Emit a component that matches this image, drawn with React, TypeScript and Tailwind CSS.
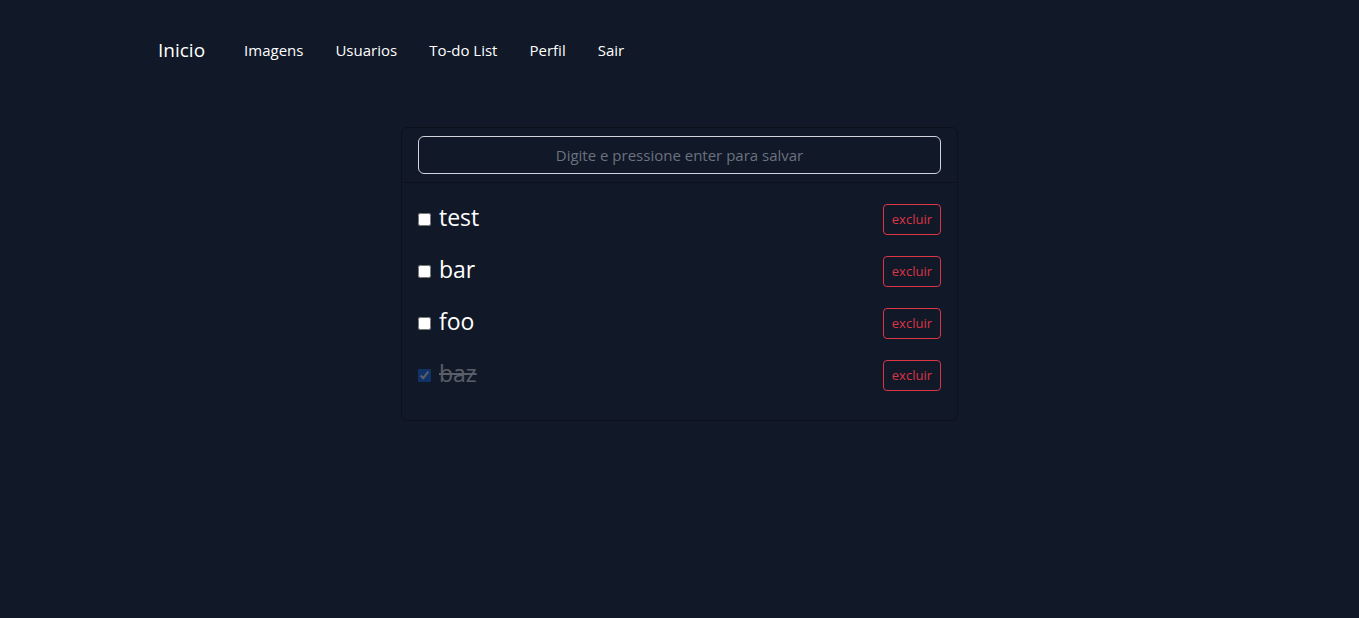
import React from 'react'

const NAV_LINKS = ['Imagens', 'Usuarios', 'To-do List', 'Perfil', 'Sair']

const TODOS = [
  { id: 1, text: 'test', done: false },
  { id: 2, text: 'bar', done: false },
  { id: 3, text: 'foo', done: false },
  { id: 4, text: 'baz', done: true },
]

const App = () => {
  return (
    <div className="min-h-[618px] bg-[#111827] font-['Open_Sans',_'Noto_Sans',_sans-serif] text-white">
      <nav className="flex h-[100px] items-center pl-[158px]">
        <a className="text-[19px] leading-[30px] text-white">Inicio</a>
        <ul className="ml-[39px] flex items-center gap-8 text-[15px] leading-6">
          {NAV_LINKS.map((link) => (
            <li key={link}>
              <a className="text-white">{link}</a>
            </li>
          ))}
        </ul>
      </nav>

      <div className="mx-auto mt-[27px] w-[557px] rounded-md border border-[#0c111c] bg-[#111827]">
        <div className="border-b border-[#0c111c] px-4 py-2">
          <input
            type="text"
            placeholder="Digite e pressione enter para salvar"
            className="h-[38px] w-full rounded-md border border-[#d1d5db] bg-[#111827] px-3 text-center text-[15px] text-white placeholder:text-[#6b7280] focus:outline-none"
          />
        </div>
        <ul className="flex flex-col gap-[11px] px-4 pt-4 pb-6">
          {TODOS.map((todo) => (
            <li key={todo.id} className="flex h-[41px] items-center justify-between">
              <label className={todo.done ? 'flex items-center gap-2 opacity-30' : 'flex items-center gap-2'}>
                <input
                  type="checkbox"
                  defaultChecked={todo.done}
                  className="h-[13px] w-[13px] accent-[#0d6efd]"
                />
                <span className={todo.done ? 'pb-1 text-[23px] leading-[29px] line-through' : 'pb-1 text-[23px] leading-[29px]'}>
                  {todo.text}
                </span>
              </label>
              <button className="h-[31px] rounded border border-[#dc3545] px-2 text-[13px] text-[#dc3545]">
                excluir
              </button>
            </li>
          ))}
        </ul>
      </div>
    </div>
  )
}

export default App
